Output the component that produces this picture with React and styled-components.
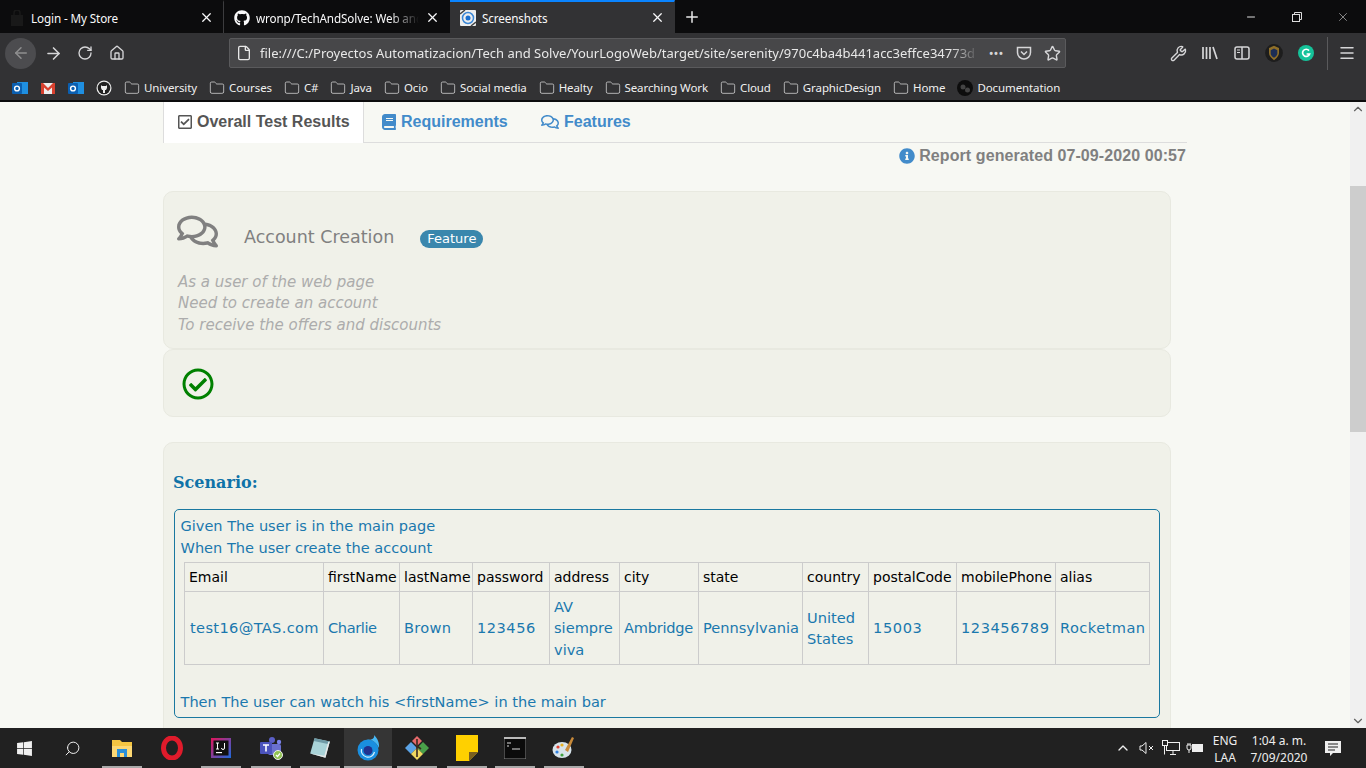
import React from 'react';
import styled, { createGlobalStyle } from 'styled-components';
import { FaGithub, FaRegCheckSquare, FaBook, FaRegComments, FaInfoCircle, FaRegCheckCircle, FaWindows } from 'react-icons/fa';
import { FiSearch } from 'react-icons/fi';
import { ArrowLeft, ArrowRight, RotateCw, Home, File, Star, X, Plus, Minus, Wrench, Folder, ChevronUp, ChevronDown, Menu } from 'lucide-react';

const Global = createGlobalStyle`
  html, body { margin: 0; padding: 0; height: 100%; overflow: hidden; background: #f7f8f3; }
  * { box-sizing: border-box; }
`;
const Shell = styled.div`
  width: 1366px; height: 768px; display: flex; flex-direction: column; overflow: hidden;
  font-family: "Noto Sans", "Open Sans", sans-serif;
`;
const TabStrip = styled.div`
  height: 33px; background: #0c0c0d; display: flex; align-items: stretch; color: #f9f9fa; flex: none;
`;
const Tab = styled.div`
  width: ${p => p.$w}px; display: flex; align-items: center; gap: 6px; padding: 0 9px 0 ${p => p.$pl || 10}px;
  background: ${p => p.$active ? '#323234' : 'transparent'};
  border-top: 2px solid ${p => p.$active ? '#0a84ff' : 'transparent'};
  border-right: 1px solid ${p => p.$sep ? '#3c3c3e' : 'transparent'};
  font-size: 11.7px; letter-spacing: -0.12px;
`;
const TabIconSlot = styled.span`
  width: 16px; height: 16px; flex: none; display: flex; align-items: center; justify-content: center;
`;
const TabTitle = styled.span`
  flex: 1; white-space: nowrap; overflow: hidden;
  ${p => p.$fade ? 'mask-image: linear-gradient(90deg, #000 82%, transparent);' : ''}
`;
const WindowControls = styled.div`
  margin-left: auto; display: flex; align-items: center;
`;
const WinButton = styled.span`
  width: 46px; height: 33px; display: flex; align-items: center; justify-content: center; color: #ddd;
`;
const NewTab = styled.span`
  width: 33px; display: flex; align-items: center; justify-content: center; color: #e8e8e8;
`;
const NavBar = styled.div`
  height: 40px; background: #323234; display: flex; align-items: center; flex: none; padding-left: 5px; color: #d6d6d8;
`;
const BackCircle = styled.span`
  width: 31px; height: 31px; border-radius: 50%; background: #4c4c4f; color: #8f8f90; margin-right: 1px;
  display: flex; align-items: center; justify-content: center;
`;
const NavBtn = styled.span`
  width: 32px; display: flex; align-items: center; justify-content: center;
`;
const UrlBar = styled.div`
  width: 837px; height: 30px; margin-left: 96px; background: #474749; border: 1px solid #5a5a5c; border-radius: 2px;
  display: flex; align-items: center; padding: 0 2px 0 6px; gap: 6px; font-size: 13px; color: #e8e8e8;
`;
const UrlText = styled.span`
  flex: 1; white-space: nowrap; overflow: hidden; margin-left: 2px;
  mask-image: linear-gradient(90deg, #000 96%, transparent);
`;
const UrlAction = styled.span`
  display: flex; align-items: center; justify-content: center; width: 22px; color: #d6d6d8;
`;
const ToolGroup = styled.div`
  margin-left: auto; display: flex; align-items: center; gap: 8px; padding-right: 7px;
`;
const ToolBtn = styled.span`
  width: 24px; display: flex; justify-content: center; align-items: center;
`;
const ToolSep = styled.span`
  width: 1px; height: 33px; background: #5a5a5c; margin-left: 1px; margin-right: -1px;
`;
const BookmarkBar = styled.div`
  height: 27px; background: #323234; display: flex; align-items: center; padding: 2px 0 0 12px; gap: 12px;
  font-size: 11.5px; color: #f0f0f0; flex: none;
`;
const Bookmark = styled.span`
  display: flex; align-items: center; gap: 4px; white-space: nowrap; letter-spacing: -0.1px;
`;
const TopLine = styled.div`
  height: 2px; background: #0c0c0d; flex: none;
`;
const Viewport = styled.div`
  flex: 1; display: flex; min-height: 0; background: #f7f8f3;
`;
const Page = styled.div`
  flex: 1; padding-left: 163px; overflow: hidden;
`;
const ReportTabs = styled.div`
  width: 1024px; height: 41px; display: flex; border-bottom: 1px solid #ddd;
  font: bold 16px "Liberation Sans", Arial, sans-serif;
`;
const ReportTab = styled.div`
  height: ${p => p.$active ? 41 : 40}px; display: flex; align-items: center; gap: ${p => p.$gap || 4}px; white-space: nowrap;
  flex: none; padding: 0 0 ${p => p.$active ? 1 : 0}px ${p => p.$pl}px;
  color: ${p => p.$active ? '#555' : '#428bca'};
  background: ${p => p.$active ? '#fff' : 'transparent'};
  border-left: ${p => p.$active ? '1px solid #ddd' : '0'};
  border-right: ${p => p.$active ? '1px solid #ddd' : '0'};
  width: ${p => p.$w ? p.$w + 'px' : 'auto'};
  svg { flex: none; }
`;
const Generated = styled.div`
  width: 1024px; height: 26px; display: flex; align-items: center; justify-content: flex-end; gap: 4px;
  font: bold 16px "Liberation Sans", Arial, sans-serif; color: #808080; padding: 0 1px 0 0; margin-bottom: 22px;
  letter-spacing: 0.08px;
`;
const Card = styled.div`
  width: 1008px; background: #f0f1e9; border: 1px solid #e8e9e0; border-radius: 10px;
`;
const FeatureCard = styled(Card)`
  height: 158px; padding: 19px 13px 0; font-family: "DejaVu Sans", Verdana, sans-serif;
`;
const FeatureHead = styled.div`
  display: flex; height: 59px; color: #808080;
`;
const FeatureName = styled.span`
  font-size: 17.5px; margin: 16px 0 0 26px;
`;
const Badge = styled.span`
  height: 18px; padding: 0 7px; background: #3a87ad; color: #fff; border-radius: 9px; font-size: 13px;
  margin: 19px 0 0 26px; line-height: 18px;
`;
const Narrative = styled.div`
  color: #acacac; font-style: italic; font-size: 15px; line-height: 21.5px; margin: 1.7px 0 0 1px;
`;
const ResultCard = styled(Card)`
  height: 68px; padding: 18px; color: green;
`;
const ScenarioCard = styled(Card)`
  height: 300px; margin-top: 25px; padding: 30px 9px 0; color: #1a78ae;
  font-family: "DejaVu Sans", Verdana, sans-serif;
`;
const ScenarioTitle = styled.div`
  font: bold 16px "DejaVu Serif", Georgia, serif; height: 36px; color: #0f73a8;
`;
const ScenarioBox = styled.div`
  width: 986px; height: 209px; border: 1px solid #1a78a0; border-radius: 5px; padding: 5px 6px 0 5.5px;
  font-size: 14.55px; line-height: 21.5px; margin-left: 1px;
`;
const Grid = styled.table`
  border-collapse: collapse; table-layout: fixed; width: 965px; margin: 4px 0 26px 3.5px; font-size: 14.6px;
`;
const Th = styled.th`
  border: 1px solid #ccc; font-weight: 400; font-size: 14px; color: #000; text-align: left; padding: 1px 4px 0; height: 29px; white-space: nowrap;
`;
const Td = styled.td`
  border: 1px solid #ccc; padding: 0 4px 0 ${p => p.$first ? 5 : 4}px; height: 73px; color: #1a78ae; line-height: 21.5px;
  letter-spacing: ${p => p.$ls || 0}px;
`;
const Scrollbar = styled.div`
  width: 16px; background: #f0f0f0; position: relative; flex: none; display: flex; flex-direction: column;
  align-items: center; justify-content: space-between; color: #606060;
`;
const Thumb = styled.div`
  position: absolute; top: 84px; left: 0; width: 16px; height: 246px; background: #cdcdcd;
`;
const Taskbar = styled.div`
  height: 40px; background: #212121; flex: none; display: flex; align-items: center; color: #f0f0f0;
`;
const TaskSlot = styled.span`
  width: ${p => p.$w || 48}px; height: 40px; display: flex; align-items: center; justify-content: center; flex: none;
  position: relative; background: ${p => p.$active ? '#353535' : 'transparent'};
  &::after {
    content: ''; display: ${p => p.$open ? 'block' : 'none'}; position: absolute; left: 50%; bottom: 0; height: 2px;
    width: ${p => p.$active ? 48 : 40}px; transform: translateX(-50%); background: #aaa;
  }
`;
const Tray = styled.div`
  margin-left: auto; display: flex; align-items: center; font-size: 12px; color: #eee; padding-right: 21px;
`;
const TrayIcon = styled.span`
  width: 24px; display: flex; justify-content: center; margin-left: ${p => p.$ml || 0}px;
`;
const TrayText = styled.div`
  text-align: center; line-height: 17px; margin-left: ${p => p.$ml || 0}px; width: ${p => p.$w}px; white-space: nowrap; padding-top: 1px;
`;

const OutlookIcon = () => (
  <svg width="16" height="16" viewBox="0 0 16 16"><rect x="5" y="2" width="11" height="12" fill="#1f8fe0"/><rect x="0" y="3" width="10" height="11" rx="1" fill="#0b5fb0"/><circle cx="5" cy="8.5" r="2.4" fill="none" stroke="#fff" strokeWidth="1.4"/></svg>
);
const GmailIcon = () => (
  <svg width="16" height="16" viewBox="0 0 16 16"><rect x="1" y="3" width="14" height="11" fill="#eee"/><path d="M1 3h2l5 5 5-5h2v11h-3V7.5L8 11 4 7.5V14H1z" fill="#d8412f"/></svg>
);
const LibraryIcon = () => (
  <svg width="18" height="16" viewBox="0 0 18 16" stroke="#d6d6d8" strokeWidth="1.7" fill="none"><path d="M2 2v12M5.5 2v12M9 2v12M12 2l4 12"/></svg>
);
const SidebarIcon = () => (
  <svg width="16" height="16" viewBox="0 0 16 16" fill="none" stroke="#d6d6d8" strokeWidth="1.5"><rect x="1" y="2" width="14" height="12" rx="2"/><path d="M8 2v12"/><path d="M3 5h3M3 7.5h3" strokeWidth="1"/></svg>
);
const PocketIcon = () => (
  <svg width="16" height="16" viewBox="0 0 16 16" fill="none" stroke="#d6d6d8" strokeWidth="1.5"><path d="M1.5 2.5h13v5a6.5 6.5 0 0 1-13 0z"/><path d="M5 6.5l3 3 3-3"/></svg>
);
const GuildIcon = () => (
  <svg width="18" height="20" viewBox="0 0 16 18"><circle cx="8" cy="9" r="8" fill="#1d1d1d"/><path d="M8 2.500l4.500 2v4.500c0 2.500-2.500 5-4.500 6.500-2-1.500-4.500-4-4.500-6.500V4.500z" fill="#8f6f28"/><path d="M8 5l3 1.500v3c0 1.500-1.500 3-3 3.800-1.500-.8-3-2.300-3-3.800v-3z" fill="#1b2d55"/></svg>
);
const GrammarlyIcon = () => (
  <svg width="16" height="16" viewBox="0 0 16 16"><circle cx="8" cy="8" r="8" fill="#15c39a"/><path d="M11 5.6A3.6 3.6 0 1 0 11.6 9H8.6" fill="none" stroke="#fff" strokeWidth="1.7"/></svg>
);
const BagIcon = () => (
  <svg width="14" height="16" viewBox="0 0 14 16"><path d="M1 5h12v11H1z" fill="#191919"/><path d="M4 5V3a3 3 0 0 1 6 0v2" fill="none" stroke="#191919" strokeWidth="1.5"/></svg>
);
const ScreenshotIcon = () => (
  <svg width="18" height="18" viewBox="0 0 16 16"><rect width="16" height="16" rx="1" fill="#eee"/><circle cx="8" cy="8" r="5.5" fill="none" stroke="#3b87d6" strokeWidth="1.5"/><circle cx="8" cy="8" r="2.500" fill="#1a6fd0"/><path d="M0 4l5-4M16 12l-5 4" stroke="#444" strokeWidth="1.5"/></svg>
);
const DocIcon = () => (
  <svg width="16" height="16" viewBox="0 0 16 16"><circle cx="8" cy="8" r="8" fill="#0d0d0d"/><circle cx="6" cy="7" r="2.5" fill="#444"/><circle cx="10.5" cy="10" r="2.5" fill="#444"/></svg>
);
const GithubCircle = () => (
  <svg width="16" height="16" viewBox="0 0 16 16"><circle cx="8" cy="8" r="7.5" fill="#eee"/><circle cx="8" cy="8" r="6.3" fill="#222"/><path d="M5 5l1 1h4l1-1v3l-1 2H9v3H7v-3H6L5 8z" fill="#eee"/></svg>
);
const Explorer = () => (
  <svg width="22" height="20" viewBox="0 0 22 20"><path d="M1 2h8l2 2h10v15H1z" fill="#f4c542"/><rect x="1" y="8" width="20" height="11" fill="#fcd874"/><rect x="6" y="11" width="10" height="8" fill="#2a8fd8"/><rect x="9" y="15" width="4" height="4" fill="#fcd874"/></svg>
);
const Opera = () => (
  <svg width="24" height="24" viewBox="0 0 24 24"><ellipse cx="12" cy="12" rx="8.5" ry="10" fill="none" stroke="#e01b2b" strokeWidth="5"/></svg>
);
const Idea = () => (
  <svg width="20" height="20" viewBox="0 0 20 20"><defs><linearGradient id="ij" x1="0" y1="0" x2="1" y2="1"><stop offset="0" stopColor="#e3145a"/><stop offset="1" stopColor="#1c6bde"/></linearGradient></defs><rect width="20" height="20" fill="url(#ij)"/><rect x="2.5" y="2.5" width="15" height="15" fill="#111"/><rect x="5" y="14" width="6" height="1.2" fill="#fff"/><path d="M5 5h3M6.500 5v6M5 11h3M13.500 5v5a1.500 1.500 0 0 1-3 0" stroke="#fff" strokeWidth="1" fill="none"/></svg>
);
const Teams = () => (
  <svg width="26" height="24" viewBox="0 0 24 24"><circle cx="13" cy="4" r="3" fill="#5b5fc7"/><circle cx="20" cy="6" r="2.2" fill="#7b83eb"/><rect x="9" y="8" width="13" height="11" rx="2" fill="#6a70d0"/><rect x="1" y="6" width="12" height="12" rx="1" fill="#4b53bc"/><path d="M4 9h6M7 9v6.5" stroke="#fff" strokeWidth="1.6"/><circle cx="19" cy="19" r="4.5" fill="#92c353" stroke="#eee"/><path d="M17 19l1.5 1.5 2.5-3" stroke="#fff" fill="none" strokeWidth="1.2"/></svg>
);
const Notepad = () => (
  <svg width="24" height="24" viewBox="0 0 22 22"><path d="M6 2l14 3-4 15-14-4z" fill="#a9d3d8"/><path d="M6 2l14 3-.7 2.5-14-3z" fill="#6f9aa6"/><path d="M2 16l14 4 4-15-1.500.5L15 18z" fill="#e8e8e8"/></svg>
);
const Firefox = () => (
  <svg width="24" height="26" viewBox="0 0 24 26"><circle cx="12" cy="15" r="10.5" fill="#1a8fe0"/><path d="M11 5c5-1 9 2 12 8 .5-5-1-9-5-13 1 3-2 5-7 5z" fill="#47b8f5"/><circle cx="12" cy="15.5" r="4.5" fill="#20318f"/><path d="M5.500 14a6.500 6.500 0 0 0 13 3" fill="none" stroke="#d6eefc" strokeWidth="1.2"/></svg>
);
const Gitk = () => (
  <svg width="24" height="24" viewBox="0 0 24 24"><path d="M7 5l5-5 5 5-5 5z" fill="#e5696b"/><path d="M0 12l6-6 6 6-6 6z" fill="#5ba3e6"/><path d="M12 12l6-6 6 6-6 6z" fill="#4aa04a"/><path d="M6 18l6-6 6 6-6 6z" fill="#f0d860"/><path d="M12 3v18M12 10l4 3" stroke="#3a2a20" strokeWidth="1.6"/></svg>
);
const Sticky = () => (
  <svg width="22" height="26" viewBox="0 0 22 26"><path d="M0 0h22v17l-9 9H0z" fill="#ffd000"/><path d="M22 17l-9 9v-9z" fill="#7a6020"/></svg>
);
const Cmd = () => (
  <svg width="22" height="22" viewBox="0 0 22 22"><rect width="22" height="22" fill="#0b0b0b" stroke="#888"/><rect width="22" height="2" fill="#bbb"/><path d="M3 6h4M3 9h2M8 12h8" stroke="#ddd" strokeWidth="1.2"/></svg>
);
const Paint = () => (
  <svg width="24" height="24" viewBox="0 0 24 24"><ellipse cx="10" cy="14" rx="9.5" ry="8" fill="#d7e3ea"/><circle cx="6" cy="11" r="1.6" fill="#e04030"/><circle cx="10" cy="9" r="1.6" fill="#e8b020"/><circle cx="5" cy="16" r="1.6" fill="#3080e0"/><circle cx="10" cy="19" r="1.6" fill="#40a040"/><path d="M13 14l7-13 2 1-6 14z" fill="#c88a3a"/></svg>
);
const NetIcon = () => (
  <svg width="18" height="16" viewBox="0 0 18 16" fill="none" stroke="#eee"><rect x="4.5" y="2.5" width="13" height="8"/><rect x=".5" y=".5" width="5" height="5" fill="#212121"/><path d="M11 11v3M8 14.500h6M2.500 6v8.500"/></svg>
);
const BatteryIcon = () => (
  <svg width="18" height="14" viewBox="0 0 18 14"><rect x="6" y="3" width="11" height="8" fill="#eee"/><path d="M1 4h4v3a2 2 0 0 1-4 0zM2 2v2M4 2v2M3 9v3" stroke="#eee" fill="none"/></svg>
);
const MuteIcon = () => (
  <svg width="16" height="14" viewBox="0 0 16 14" fill="none" stroke="#eee"><path d="M1 5h2l4-3.500v11L3 9H1z"/><path d="M10 5l4 4M14 5l-4 4"/></svg>
);
const Notify = () => (
  <svg width="16" height="15" viewBox="0 0 16 15"><path d="M0 0h16v12H8l-3 3v-3H0z" fill="#eee"/><path d="M3 3h10M3 6h10M3 9h7" stroke="#212121"/></svg>
);
const RestoreIcon = () => (
  <svg width="10" height="10" viewBox="0 0 10 10" fill="none" stroke="#ddd"><rect x=".5" y="2.500" width="7" height="7"/><path d="M2.500 2.500v-2h7v7h-2"/></svg>
);

const folders = ['University', 'Courses', 'C#', 'Java', 'Ocio', 'Social media', 'Healty', 'Searching Work', 'Cloud', 'GraphicDesign', 'Home'];
const heads = ['Email', 'firstName', 'lastName', 'password', 'address', 'city', 'state', 'country', 'postalCode', 'mobilePhone', 'alias'];
const cells = [
  ['test16@TAS.com', 0.35], ['Charlie', -0.4], ['Brown', 0.3], ['123456', 0.5], ['AV siempre viva', 0],
  ['Ambridge', -0.25], ['Pennsylvania', 0], ['United States', 0], ['15003', 0.6], ['123456789', 0.55], ['Rocketman', 0.45],
];
const widths = [139, 76, 73, 77, 70, 79, 104, 66, 88, 99, 94];
const apps = [
  [<Explorer />, 52], [<Opera />, 48], [<Idea />, 50], [<Teams />, 50], [<Notepad />, 48],
  [<Firefox />, 48], [<Gitk />, 50], [<Sticky />, 49], [<Cmd />, 47], [<Paint />, 52],
];

export default function App() {
  return (
    <Shell>
      <Global />
      <TabStrip>
        <Tab $w={224} $sep $pl={9}><TabIconSlot><BagIcon /></TabIconSlot><TabTitle>Login - My Store</TabTitle><X size={15} /></Tab>
        <Tab $w={226}><TabIconSlot><FaGithub size={16} /></TabIconSlot><TabTitle $fade>wronp/TechAndSolve: Web and</TabTitle><X size={15} /></Tab>
        <Tab $w={225} $active><TabIconSlot><ScreenshotIcon /></TabIconSlot><TabTitle>Screenshots</TabTitle><X size={15} /></Tab>
        <NewTab><Plus size={18} /></NewTab>
        <WindowControls>
          <WinButton><Minus size={12} /></WinButton>
          <WinButton><RestoreIcon /></WinButton>
          <WinButton><X size={14} strokeWidth={1} /></WinButton>
        </WindowControls>
      </TabStrip>
      <NavBar>
        <BackCircle><ArrowLeft size={18} /></BackCircle>
        <NavBtn><ArrowRight size={19} /></NavBtn>
        <NavBtn><RotateCw size={16} /></NavBtn>
        <NavBtn><Home size={16} /></NavBtn>
        <UrlBar>
          <File size={16} />
          <UrlText>file:///C:/Proyectos Automatizacion/Tech and Solve/YourLogoWeb/target/site/serenity/970c4ba4b441acc3effce34773d</UrlText>
          <UrlAction>•••</UrlAction>
          <UrlAction><PocketIcon /></UrlAction>
          <UrlAction><Star size={17} /></UrlAction>
        </UrlBar>
        <ToolGroup>
          <ToolBtn><Wrench size={17} /></ToolBtn>
          <ToolBtn><LibraryIcon /></ToolBtn>
          <ToolBtn><SidebarIcon /></ToolBtn>
          <ToolBtn><GuildIcon /></ToolBtn>
          <ToolBtn><GrammarlyIcon /></ToolBtn>
          <ToolSep />
          <ToolBtn><Menu size={18} /></ToolBtn>
        </ToolGroup>
      </NavBar>
      <BookmarkBar>
        <OutlookIcon /><GmailIcon /><OutlookIcon /><GithubCircle />
        {folders.map(f => <Bookmark key={f}><Folder size={16} strokeWidth={1} />{f}</Bookmark>)}
        <Bookmark><DocIcon />Documentation</Bookmark>
      </BookmarkBar>
      <TopLine />
      <Viewport>
        <Page>
          <ReportTabs>
            <ReportTab $active $w={201} $pl={13}><FaRegCheckSquare size={16} />Overall Test Results</ReportTab>
            <ReportTab $w={159} $pl={17}><FaBook size={16} />Requirements</ReportTab>
            <ReportTab $pl={18} $gap={5}><FaRegComments size={18} />Features</ReportTab>
          </ReportTabs>
          <Generated><FaInfoCircle size={16} color="#428bca" />Report generated 07-09-2020 00:57</Generated>
          <FeatureCard>
            <FeatureHead>
              <FaRegComments size={41} />
              <FeatureName>Account Creation</FeatureName>
              <Badge>Feature</Badge>
            </FeatureHead>
            <Narrative>As a user of the web page<br />Need to create an account<br />To receive the offers and discounts</Narrative>
          </FeatureCard>
          <ResultCard><FaRegCheckCircle size={32} /></ResultCard>
          <ScenarioCard>
            <ScenarioTitle>Scenario:</ScenarioTitle>
            <ScenarioBox>
              Given The user is in the main page<br />When The user create the account
              <Grid>
                <colgroup>{widths.map((w, i) => <col key={i} style={{ width: w }} />)}</colgroup>
                <thead><tr>{heads.map(h => <Th key={h}>{h}</Th>)}</tr></thead>
                <tbody><tr>{cells.map(([c, ls], i) => <Td key={c} $ls={ls} $first={i === 0}>{c}</Td>)}</tr></tbody>
              </Grid>
              {'Then The user can watch his <firstName> in the main bar'}
            </ScenarioBox>
          </ScenarioCard>
        </Page>
        <Scrollbar>
          <ChevronUp size={14} />
          <Thumb />
          <ChevronDown size={14} />
        </Scrollbar>
      </Viewport>
      <Taskbar>
        <TaskSlot><FaWindows size={17} /></TaskSlot>
        <TaskSlot><FiSearch size={17} strokeWidth={1.4} style={{ transform: 'scaleX(-1)' }} /></TaskSlot>
        {apps.map(([a, w], i) => <TaskSlot key={i} $open={i !== 1} $active={i === 5} $w={w}>{a}</TaskSlot>)}
        <Tray>
          <TrayIcon><ChevronUp size={16} /></TrayIcon>
          <TrayIcon><MuteIcon /></TrayIcon>
          <TrayIcon><NetIcon /></TrayIcon>
          <TrayIcon><BatteryIcon /></TrayIcon>
          <TrayText $w={34} $ml={1}>ENG<br />LAA</TrayText>
          <TrayText $w={60} $ml={7}>1:04 a. m.<br />7/09/2020</TrayText>
          <TrayIcon $ml={12}><Notify /></TrayIcon>
        </Tray>
      </Taskbar>
    </Shell>
  );
}
